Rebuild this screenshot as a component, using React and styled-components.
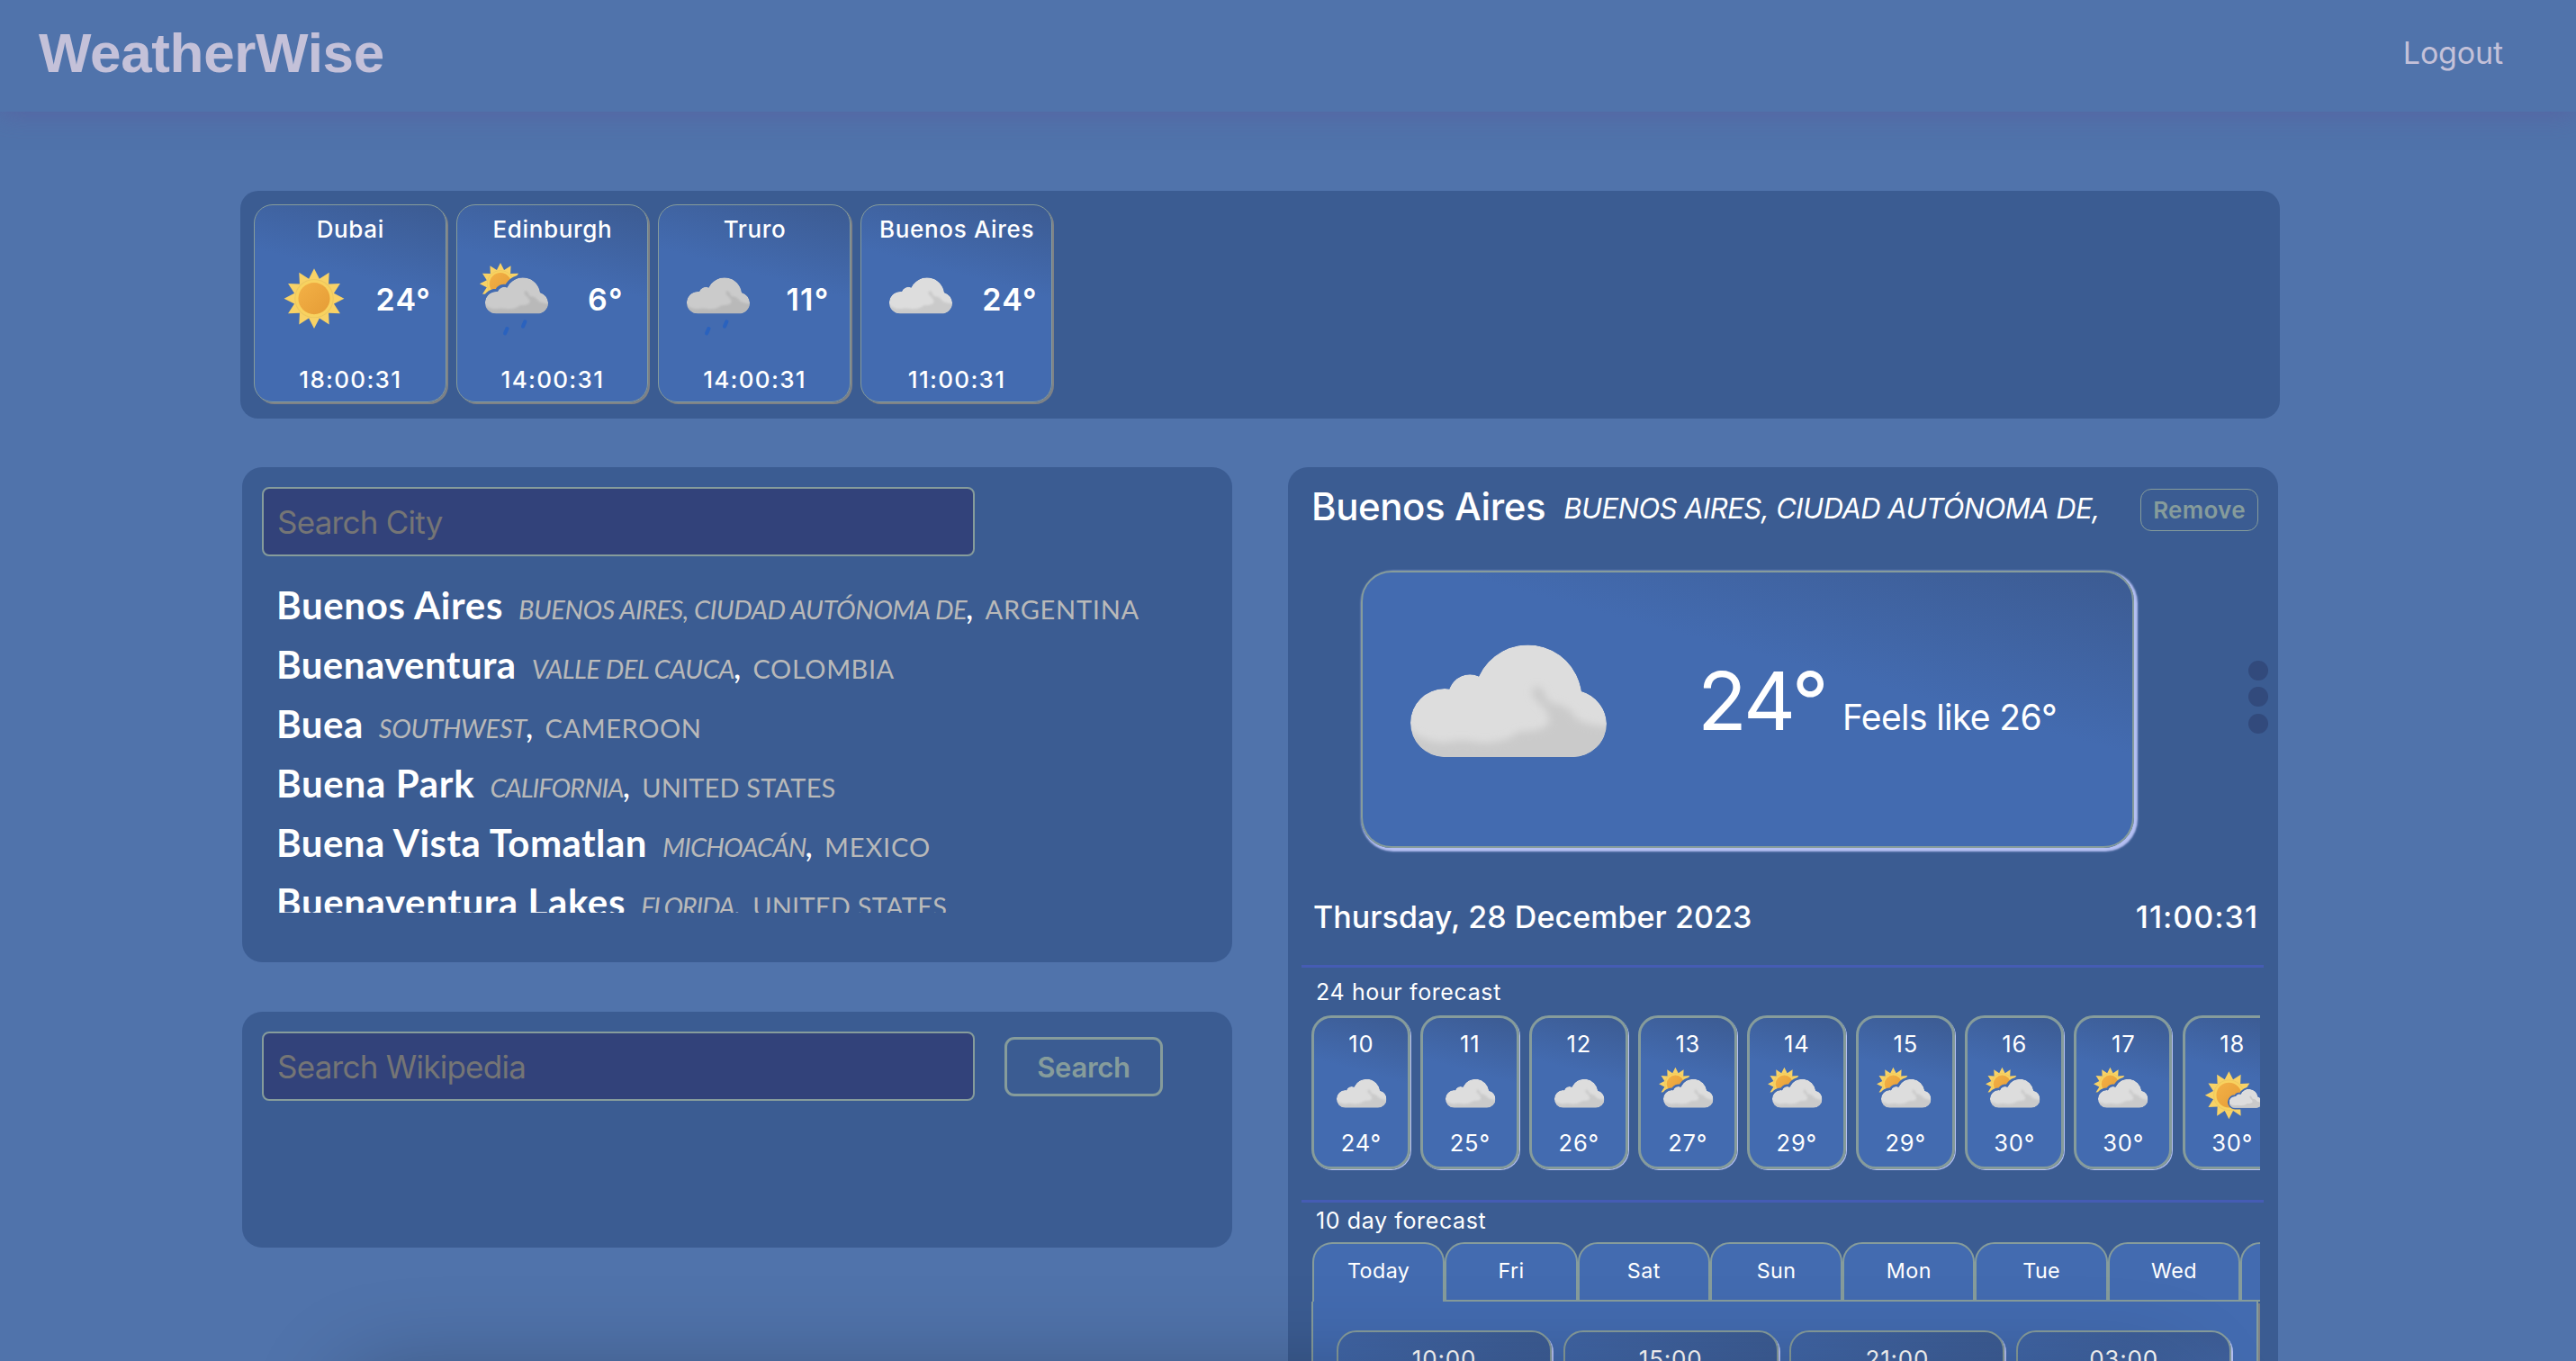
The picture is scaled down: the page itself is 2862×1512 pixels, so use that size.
import React, { useId } from "react";
import styled, { createGlobalStyle, css } from "styled-components";

const sage = "#869c9b";
const panelBlue = "#3b5c92";
const sans = `Inter, "Liberation Sans", sans-serif`;

const Global = createGlobalStyle`
  *, *::before, *::after { box-sizing: border-box; }
  body { margin: 0; background: #5073ab; color: #fff; font-family: ${sans}; overflow: hidden; }
`;

const skyGradient = css`
  background: linear-gradient(195deg, #3c5b92 0%, #436bb0 38%);
`;

const Page = styled.div`
  height: 1512px;
  overflow: hidden;
  background: #5073ab;
`;

const Header = styled.header`
  display: flex;
  align-items: center;
  justify-content: space-between;
  height: 124px;
  padding: 0 81px 7px 43px;
  background: #5073ab;
  box-shadow: 0 1px 28px rgba(96, 82, 152, 0.5);
`;

const Brand = styled.h1`
  margin: 0;
  font: bold 62px/80px "Liberation Sans", Arial, sans-serif;
  letter-spacing: -0.35px;
  color: #c4c1d9;
`;

const Logout = styled.a`
  font-size: 34px;
  line-height: 44px;
  letter-spacing: -0.15px;
  color: #c4c1d9;
`;

const Main = styled.main`
  width: 2266px;
  margin-left: 267px;
  padding-top: 88px;
`;

const SavedBar = styled.section`
  display: flex;
  gap: 11px;
  height: 253px;
  padding: 15px;
  background: ${panelBlue};
  border-radius: 20px;
`;

const SavedCard = styled.article`
  display: flex;
  flex-direction: column;
  width: 213.6px;
  height: 220px;
  border: 1px solid ${sage};
  border-radius: 21px;
  box-shadow: 2px 2px 0 #7f8286;
  ${skyGradient}
`;

const SavedName = styled.div`
  padding-left: 1px;
  text-align: center;
  font-weight: 500;
  font-size: 26px;
  line-height: 53px;
  letter-spacing: 0.65px;
`;

const SavedWeather = styled.div`
  display: flex;
  align-items: center;
  gap: 8px;
  height: 100px;
  padding-left: 21px;
`;

const SavedTemp = styled.div`
  width: 98px;
  padding-top: 3px;
  text-align: center;
  font-weight: 600;
  font-size: 34px;
  letter-spacing: 1.2px;
`;

const SavedTime = styled.div`
  margin-top: auto;
  padding-left: 1px;
  text-align: center;
  font-weight: 500;
  font-size: 26px;
  line-height: 48px;
  letter-spacing: 1.3px;
`;

const Columns = styled.div`
  display: flex;
  gap: 62px;
  margin-top: 54px;
  padding-left: 2px;
`;

const LeftColumn = styled.div`
  display: flex;
  flex-direction: column;
  gap: 55px;
  width: 1100px;
`;

const SearchPanel = styled.section`
  height: ${(p) => p.$height}px;
  padding: 22px;
  background: ${panelBlue};
  border-radius: 22px;
`;

const SearchRow = styled.form`
  display: flex;
  align-items: center;
  gap: 33px;
`;

const SearchInput = styled.input`
  width: 792px;
  height: 77px;
  padding: 1px 0 0 15px;
  font: 400 35px ${sans};
  letter-spacing: -0.75px;
  color: #fff;
  background: #32427a;
  border: 2px solid ${sage};
  border-radius: 8px;
  outline: none;
  &::placeholder { color: #757575; opacity: 1; }
`;

const SearchButton = styled.button`
  width: 176px;
  height: 66px;
  padding: 2px 0 0;
  font: 600 31px ${sans};
  letter-spacing: -0.26px;
  color: ${sage};
  background: transparent;
  border: 3px solid ${sage};
  border-radius: 11px;
`;

const CityList = styled.ul`
  height: 375px;
  margin: 21px 0 0;
  padding: 0 0 0 16px;
  overflow: hidden;
  list-style: none;
  font-family: Lato, "Open Sans", sans-serif;
`;

const CityRow = styled.li`
  display: flex;
  align-items: baseline;
  height: 66px;
  line-height: 66px;
  white-space: nowrap;
`;

const CityName = styled.span`
  font-weight: 700;
  font-size: 42px;
  letter-spacing: ${(p) => p.$track}px;
`;

const CityRegion = styled.em`
  margin-left: 17px;
  font-size: 29px;
  letter-spacing: ${(p) => p.$track}px;
  color: #b9b9b9;
`;

const Comma = styled.span`
  font-size: 38px;
  font-style: italic;
`;

const CityCountry = styled.span`
  margin-left: 12px;
  font-size: 29px;
  letter-spacing: ${(p) => p.$track}px;
  color: #b9b9b9;
`;

const DetailPanel = styled.section`
  display: flex;
  flex-direction: column;
  width: 1100px;
  height: 1100px;
  background: ${panelBlue};
  border-radius: 22px;
  & > * { flex: none; }
`;

const DetailHead = styled.div`
  display: flex;
  align-items: flex-start;
  height: 115px;
  padding: 16px 22px 0 26px;
`;

const DetailCity = styled.h2`
  margin: 0;
  font-weight: 500;
  font-size: 42px;
  line-height: 55px;
  letter-spacing: -0.42px;
  white-space: nowrap;
`;

const DetailRegion = styled.em`
  margin-left: 20px;
  font-size: 31px;
  line-height: 60px;
  letter-spacing: -0.53px;
  white-space: nowrap;
`;

const RemoveButton = styled.button`
  width: 131px;
  height: 47px;
  margin: 8px 0 0 auto;
  padding: 0;
  font: 600 26px ${sans};
  letter-spacing: 0.29px;
  color: ${sage};
  background: transparent;
  border: 1px solid ${sage};
  border-radius: 12px;
`;

const NowRow = styled.div`
  display: flex;
  justify-content: space-between;
  padding: 0 11px 0 81px;
`;

const NowCard = styled.div`
  display: flex;
  align-items: center;
  width: 859px;
  height: 308px;
  padding: 0 0 3px 22px;
  border: 2px solid ${sage};
  border-radius: 34px;
  box-shadow: 2px 2px 2px 2px #b4bff3;
  ${skyGradient}
`;

const NowReading = styled.div`
  display: flex;
  align-items: baseline;
  margin: 0 0 16px 70px;
  white-space: nowrap;
`;

const NowTemp = styled.span`
  width: 161px;
  font-size: 90px;
  line-height: 100px;
  letter-spacing: -2.5px;
`;

const FeelsLike = styled.span`
  font-size: 39px;
  letter-spacing: -0.62px;
`;

const Dots = styled.div`
  display: flex;
  flex-direction: column;
  gap: 7.5px;
  padding-top: 99.5px;
`;

const Dot = styled.span`
  width: 22px;
  height: 22px;
  border-radius: 50%;
  background: #324a7c;
`;

const DateRow = styled.div`
  display: flex;
  justify-content: space-between;
  margin-top: 24px;
  padding: 0 22px 0 28px;
  font-weight: 500;
  font-size: 34px;
  line-height: 106px;
  letter-spacing: 0.07px;
`;

const Clock = styled.span`
  letter-spacing: 1px;
`;

const Divider = styled.hr`
  width: 1069px;
  height: 3px;
  margin: 0 0 0 15px;
  border: 0;
  background: #455cb4;
`;

const SectionLabel = styled.div`
  height: ${(p) => p.$height}px;
  padding-left: 31px;
  font-size: 25px;
  line-height: ${(p) => p.$line}px;
  letter-spacing: 0.62px;
`;

const HourStrip = styled.div`
  display: flex;
  gap: 11.4px;
  width: 1054px;
  height: 172px;
  margin: 0 0 33px 26px;
  overflow: hidden;
`;

const HourCard = styled.div`
  display: flex;
  flex: none;
  flex-direction: column;
  align-items: center;
  width: 109.6px;
  height: 170.5px;
  border: 3px solid ${sage};
  border-radius: 22px;
  box-shadow: 1px 1px 0 #b4bff3;
  font-size: 25.5px;
  letter-spacing: 0.8px;
  ${skyGradient}
`;

const HourText = styled.div`
  padding-left: 1px;
  line-height: ${(p) => p.$line}px;
`;

const HourIcon = styled.div`
  display: flex;
  align-items: center;
  height: 55.5px;
  padding: 2px 0 0 1px;
`;

const TabStrip = styled.div`
  display: flex;
  width: 1053px;
  height: 66px;
  margin-left: 27px;
  overflow: hidden;
`;

const Tab = styled.button`
  display: flex;
  flex: none;
  justify-content: center;
  align-items: flex-start;
  width: 147.3px;
  height: 66px;
  padding: 0;
  font: 400 23.3px/59px ${sans};
  letter-spacing: 0.4px;
  color: #fff;
  background: #436bb0;
  border: 2px solid ${sage};
  border-bottom-width: ${(p) => (p.$active ? 0 : 2)}px;
  border-radius: 22px 22px 0 0;
`;

const TabBody = styled.div`
  display: flex;
  gap: 12.7px;
  width: 1052px;
  height: 300px;
  margin-left: 26px;
  padding: 31.5px 0 0 26px;
  border: solid ${sage};
  border-width: 0 2px 2px;
  box-shadow: 2px 2px 0 #7f8286;
  background: #436bb0;
`;

const PeriodCard = styled.div`
  flex: none;
  width: 239px;
  height: 230px;
  border: 2px solid ${sage};
  border-radius: 22px;
  box-shadow: 2px 2px 0 #b4bff3;
  text-align: center;
  font-size: 26px;
  line-height: 60px;
  letter-spacing: 0.8px;
  ${skyGradient}
`;

const BottomSheet = styled.div`
  position: fixed;
  top: 1528px;
  left: 385px;
  width: 2040px;
  height: 400px;
  border-radius: 40px;
  box-shadow: 0 0 105px rgba(0, 0, 0, 0.28);
`;

const Icon = styled.svg`
  flex: none;
  display: block;
  overflow: visible;
`;

const cloudPath =
  "M38 123 A38 38 0 0 1 38 47 Q41 47 43.3 47.6 A24 24 0 0 1 76 33.5 A60 60 0 0 1 190 50 A39 39 0 0 1 218 86 A37.500 37.500 0 0 1 180 123 Z";

function starPoints(cx, cy, outer) {
  const pts = [];
  for (let i = 0; i < 24; i++) {
    const r = i % 2 ? outer * 0.68 : outer;
    const a = (i * Math.PI) / 12;
    pts.push(`${(cx + r * Math.sin(a)).toFixed(2)},${(cy - r * Math.cos(a)).toFixed(2)}`);
  }
  return pts.join(" ");
}

function Sun({ cx, cy, r, fill }) {
  return (
    <>
      <polygon points={starPoints(cx, cy, r)} fill="#f8d266" />
      <circle cx={cx} cy={cy} r={r * 0.65} fill="#ecc760" />
      <circle cx={cx} cy={cy} r={r * 0.62} fill="#f8d25f" />
      <circle cx={cx} cy={cy} r={r * 0.525} fill={fill} />
    </>
  );
}

function Cloud({ id, dim }) {
  return (
    <g clipPath={`url(#${id}-clip)`}>
      <path d={cloudPath} fill={dim ? "#cbcbcb" : "#dddddd"} />
      <path
        d="M-12 82 Q6 106 38 107 Q58 102 76 107 Q106 108 120 95 Q152 94 154 84 Q156 76 146 66 Q134 56 135 49 Q139 42 146 47 L154 62 Q178 66 184 80 Q200 90 232 90 V140 H-12 Z"
        fill={dim ? "#b9b9b9" : "#cacaca"}
        filter={`url(#${id}-soft)`}
      />
    </g>
  );
}

function WeatherIcon({ kind, size }) {
  const id = "w" + useId().replace(/[^a-zA-Z0-9]/g, "");
  const small = "translate(97 43) scale(0.66)";
  const behind = kind === "partly" || kind === "sunRain";
  const raining = kind === "rain" || kind === "sunRain";
  return (
    <Icon width={size} height={size} viewBox="-31 -71 280 280">
      <defs>
        <clipPath id={`${id}-clip`}><path d={cloudPath} /></clipPath>
        <filter id={`${id}-soft`} x="-20%" y="-20%" width="140%" height="140%">
          <feGaussianBlur stdDeviation="4" />
        </filter>
        <linearGradient id={`${id}-core`} x1="0" y1="0" x2="1" y2="1">
          <stop offset="0" stopColor="#f3b146" />
          <stop offset="1" stopColor="#e59c36" />
        </linearGradient>
        <mask id={`${id}-cut`} maskUnits="userSpaceOnUse" x="-80" y="-100" width="380" height="360">
          <rect x="-80" y="-100" width="380" height="360" fill="#fff" />
          <path d={cloudPath} transform={kind === "mostlySun" ? small : undefined} stroke="#000" strokeWidth="20" />
        </mask>
      </defs>
      {kind === "sun" && <Sun cx={109} cy={71} r={104} fill={`url(#${id}-core)`} />}
      {behind && (
        <g mask={`url(#${id}-cut)`}><Sun cx={53} cy={20} r={72} fill={`url(#${id}-core)`} /></g>
      )}
      {kind === "mostlySun" && (
        <>
          <g mask={`url(#${id}-cut)`}><Sun cx={96} cy={69} r={104} fill={`url(#${id}-core)`} /></g>
          <g transform={small}><Cloud id={id} /></g>
        </>
      )}
      {kind !== "sun" && kind !== "mostlySun" && <Cloud id={id} dim={raining} />}
      {raining && (
        <g stroke="#2a62be" strokeWidth="13" strokeLinecap="round">
          <path d="M69 191 L76 175" />
          <path d="M131 167 L138 151" />
        </g>
      )}
    </Icon>
  );
}

const saved = [
  { name: "Dubai", kind: "sun", temp: "24°", time: "18:00:31" },
  { name: "Edinburgh", kind: "sunRain", temp: "6°", time: "14:00:31" },
  { name: "Truro", kind: "rain", temp: "11°", time: "14:00:31" },
  { name: "Buenos Aires", kind: "cloud", temp: "24°", time: "11:00:31" },
];

const cities = [
  ["Buenos Aires", "BUENOS AIRES, CIUDAD AUTÓNOMA DE", "ARGENTINA", 0.65, -0.52, 0.74],
  ["Buenaventura", "VALLE DEL CAUCA", "COLOMBIA", 0.45, -0.5, 0.56],
  ["Buea", "SOUTHWEST", "CAMEROON", 0.5, -0.25, 0.6],
  ["Buena Park", "CALIFORNIA", "UNITED STATES", 0.7, -1.0, 0.18],
  ["Buena Vista Tomatlan", "MICHOACÁN", "MEXICO", 0.46, -0.85, 0.85],
  ["Buenaventura Lakes", "FLORIDA", "UNITED STATES", 0.62, -1.3, 0.23],
];

const hours = [
  ["10", "cloud", "24°"],
  ["11", "cloud", "25°"],
  ["12", "cloud", "26°"],
  ["13", "partly", "27°"],
  ["14", "partly", "29°"],
  ["15", "partly", "29°"],
  ["16", "partly", "30°"],
  ["17", "partly", "30°"],
  ["18", "mostlySun", "30°"],
];

const days = ["Today", "Fri", "Sat", "Sun", "Mon", "Tue", "Wed", ""];
const periods = ["10:00", "15:00", "21:00", "03:00"];

export default function App() {
  return (
    <Page>
      <Global />
      <Header>
        <Brand>WeatherWise</Brand>
        <Logout>Logout</Logout>
      </Header>
      <Main>
        <SavedBar>
          {saved.map((c) => (
            <SavedCard key={c.name}>
              <SavedName>{c.name}</SavedName>
              <SavedWeather>
                <WeatherIcon kind={c.kind} size={90} />
                <SavedTemp>{c.temp}</SavedTemp>
              </SavedWeather>
              <SavedTime>{c.time}</SavedTime>
            </SavedCard>
          ))}
        </SavedBar>
        <Columns>
          <LeftColumn>
            <SearchPanel $height={550}>
              <SearchInput placeholder="Search City" />
              <CityList>
                {cities.map(([name, region, country, a, b, c]) => (
                  <CityRow key={name}>
                    <CityName $track={a}>{name}</CityName>
                    <CityRegion $track={b}>{region}</CityRegion>
                    <Comma>,</Comma>
                    <CityCountry $track={c}>{country}</CityCountry>
                  </CityRow>
                ))}
              </CityList>
            </SearchPanel>
            <SearchPanel $height={262}>
              <SearchRow>
                <SearchInput placeholder="Search Wikipedia" />
                <SearchButton type="button">Search</SearchButton>
              </SearchRow>
            </SearchPanel>
          </LeftColumn>
          <DetailPanel>
            <DetailHead>
              <DetailCity>Buenos Aires</DetailCity>
              <DetailRegion>BUENOS AIRES, CIUDAD AUTÓNOMA DE,</DetailRegion>
              <RemoveButton>Remove</RemoveButton>
            </DetailHead>
            <NowRow>
              <NowCard>
                <WeatherIcon kind="cloud" size={280} />
                <NowReading>
                  <NowTemp>24°</NowTemp>
                  <FeelsLike>Feels like 26°</FeelsLike>
                </NowReading>
              </NowCard>
              <Dots>
                <Dot />
                <Dot />
                <Dot />
              </Dots>
            </NowRow>
            <DateRow>
              <span>Thursday, 28 December 2023</span>
              <Clock>11:00:31</Clock>
            </DateRow>
            <Divider />
            <SectionLabel $height={53} $line={54}>24 hour forecast</SectionLabel>
            <HourStrip>
              {hours.map(([hour, kind, temp]) => (
                <HourCard key={hour}>
                  <HourText $line={57}>{hour}</HourText>
                  <HourIcon><WeatherIcon kind={kind} size={71.4} /></HourIcon>
                  <HourText $line={52}>{temp}</HourText>
                </HourCard>
              ))}
            </HourStrip>
            <Divider />
            <SectionLabel $height={44} $line={40}>10 day forecast</SectionLabel>
            <TabStrip>
              {days.map((d, i) => (
                <Tab key={i} $active={i === 0}>{d}</Tab>
              ))}
            </TabStrip>
            <TabBody>
              {periods.map((p) => (
                <PeriodCard key={p}>{p}</PeriodCard>
              ))}
            </TabBody>
          </DetailPanel>
        </Columns>
      </Main>
      <BottomSheet />
    </Page>
  );
}
